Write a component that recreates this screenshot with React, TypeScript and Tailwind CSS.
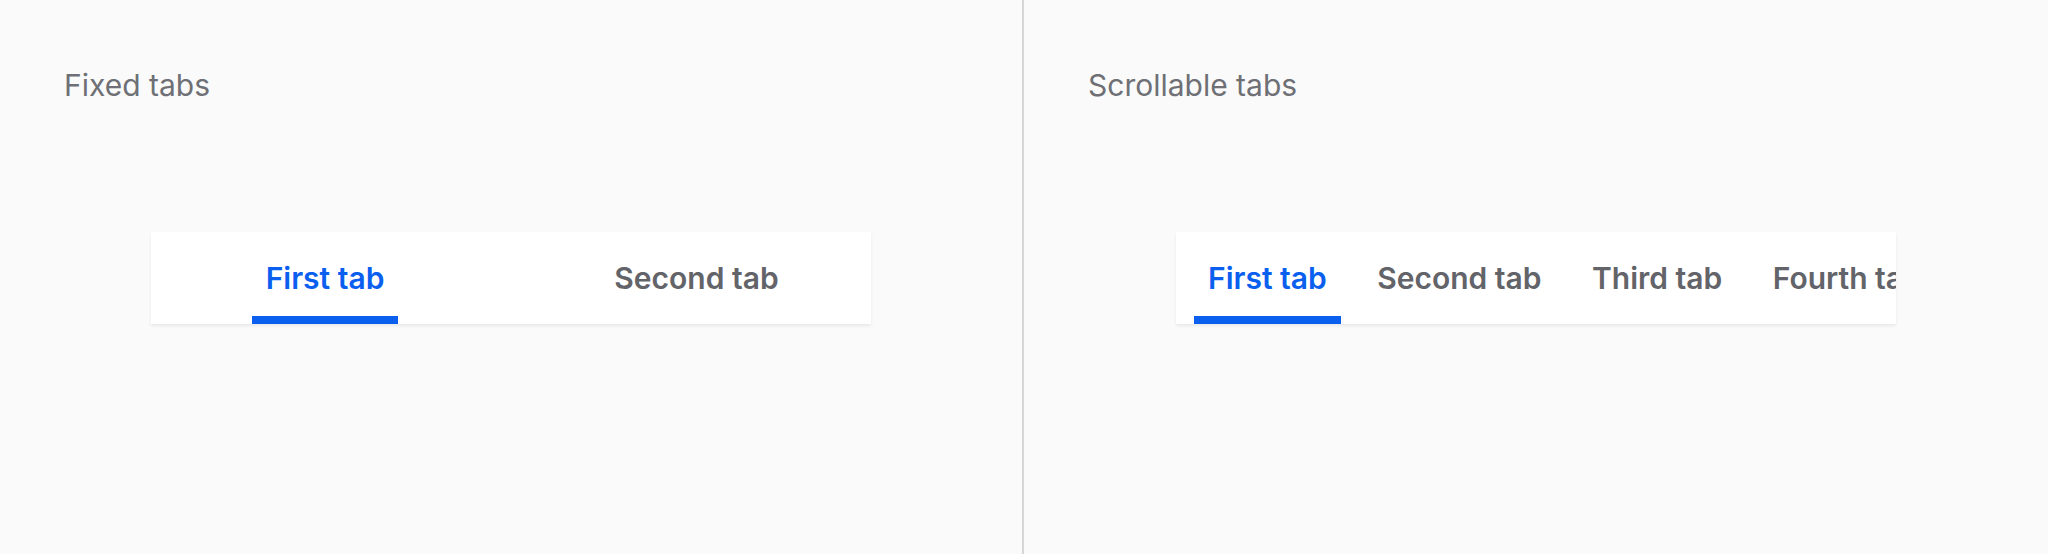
import React, { useState } from 'react';

const font = "font-['Inter','Noto_Sans',sans-serif]";

interface TabProps {
  label: string;
  active: boolean;
  onClick: () => void;
}

const Tab: React.FC<TabProps> = ({ label, active, onClick }) => (
  <button
    onClick={onClick}
    className={`relative h-full shrink-0 flex items-center px-[14px] whitespace-nowrap text-[30px] leading-none font-semibold ${
      active ? 'text-[#0b5fef]' : 'text-[#636469]'
    }`}
  >
    {label}
    {active && <span className="absolute left-0 right-0 bottom-0 h-[8px] bg-[#0b5fef]" />}
  </button>
);

const FixedTabs: React.FC = () => {
  const [active, setActive] = useState(0);
  const tabs = ['First tab', 'Second tab'];
  const widths = ['w-[348px]', 'w-[395px]'];
  return (
    <div className="mx-auto w-[720px] h-[92px] bg-white flex shadow-[0_2px_3px_rgba(0,0,0,0.07)]">
      {tabs.map((t, i) => (
        <div key={t} className={`${widths[i]} shrink-0 h-full flex justify-center`}>
          <Tab label={t} active={active === i} onClick={() => setActive(i)} />
        </div>
      ))}
    </div>
  );
};

const ScrollableTabs: React.FC = () => {
  const [active, setActive] = useState(0);
  const tabs = ['First tab', 'Second tab', 'Third tab', 'Fourth tab'];
  return (
    <div className="mx-auto w-[720px] h-[92px] bg-white flex gap-[22.5px] pl-[18px] overflow-hidden shadow-[0_2px_3px_rgba(0,0,0,0.07)]">
      {tabs.map((t, i) => (
        <Tab key={t} label={t} active={active === i} onClick={() => setActive(i)} />
      ))}
    </div>
  );
};

export default function App() {
  return (
    <div className={`w-[2048px] h-[554px] bg-[#fafafa] flex ${font}`}>
      <section className="w-[1022px] shrink-0 flex flex-col">
        <h2 className="pt-[70px] pl-[64px] text-[30px] leading-none font-normal text-[#6e7075]">Fixed tabs</h2>
        <div className="mt-[132px]">
          <FixedTabs />
        </div>
      </section>
      <div className="w-[2px] shrink-0 bg-[#d6d6d6]" />
      <section className="flex-1 flex flex-col">
        <h2 className="pt-[70px] pl-[64px] text-[30px] leading-none font-normal text-[#6e7075]">Scrollable tabs</h2>
        <div className="mt-[132px]">
          <ScrollableTabs />
        </div>
      </section>
    </div>
  );
}
